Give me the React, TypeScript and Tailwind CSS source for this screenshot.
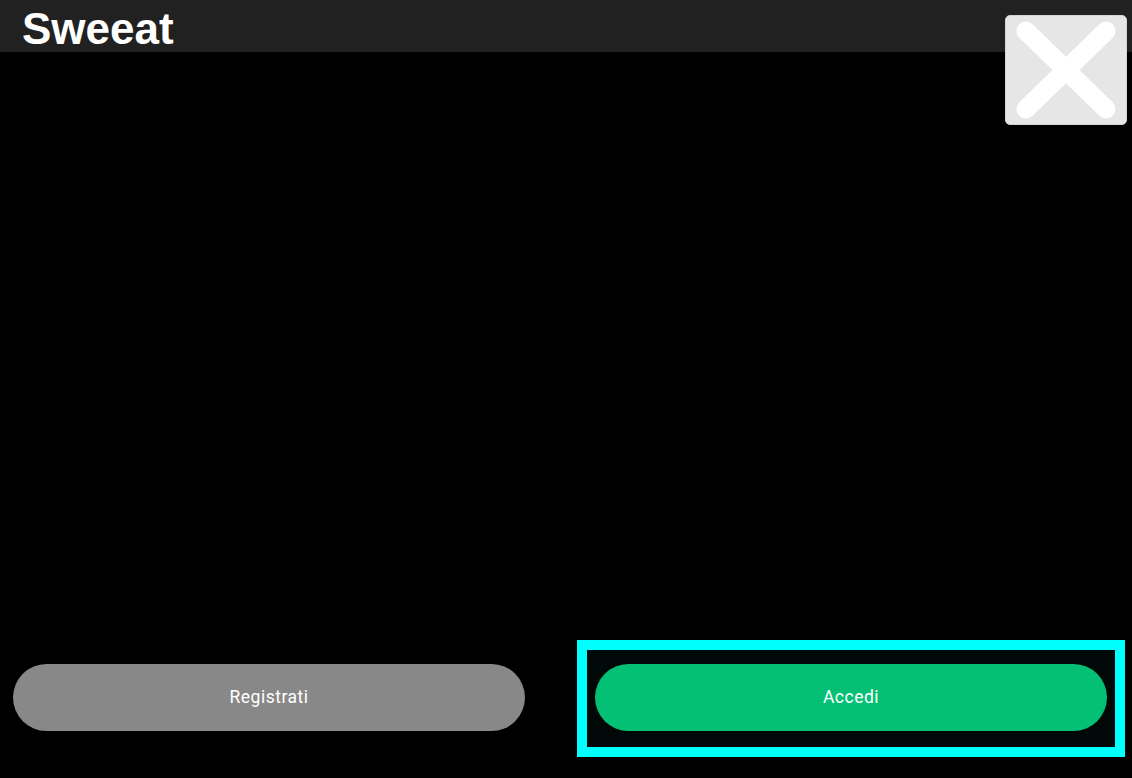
import React from "react";

export default function App() {
  return (
    <main className="relative flex flex-col w-[1132px] h-[778px] bg-black overflow-hidden">
      <header className="h-[52px] bg-[#212121] pl-[22px] pt-[5px]">
        <h1 className="text-[44px] leading-[47px] font-bold text-white font-['Liberation_Sans',Arial,sans-serif]">
          Sweeat
        </h1>
      </header>

      <button className="absolute left-[1005px] top-[15px] w-[122px] h-[110px] rounded-[5px] bg-[#e6e6e6] border border-[#d4d4d4]">
        <svg width="122" height="110" viewBox="0 0 122 110" className="absolute -left-px -top-px">
          <path d="M21 16 L101 94 M101 16 L21 94" stroke="#ffffff" strokeWidth="19" strokeLinecap="round" />
        </svg>
      </button>

      <div className="flex-1" />

      <div className="flex items-start pb-[21px] font-['Roboto',sans-serif] font-normal">
        <button className="ml-[13px] mt-[24px] w-[512px] h-[67px] rounded-full bg-[#888888] text-white text-[17.5px] tracking-[0.5px]">
          Registrati
        </button>
        <div className="ml-[52px] w-[548px] h-[117px] border-[10px] border-[#00ffff] bg-[#000808] pt-[14px] px-[8px]">
          <button className="w-[512px] h-[67px] rounded-full bg-[#04c074] text-white text-[17.5px] tracking-[0.5px]">
            Accedi
          </button>
        </div>
      </div>
    </main>
  );
}
